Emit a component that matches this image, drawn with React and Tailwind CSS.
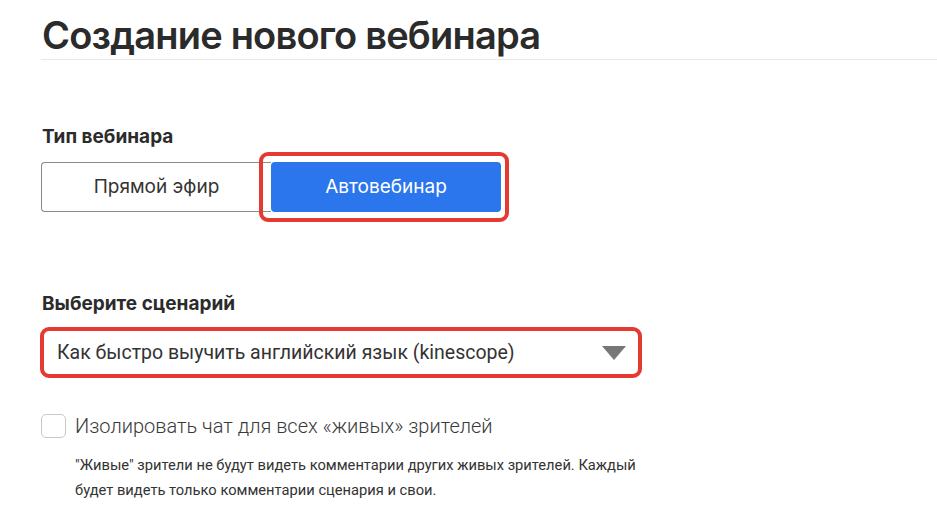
export default function App() {
  return (
    <div className="min-h-screen bg-white pl-[41px] font-['Inter',sans-serif] text-[#2d2d2d]">
      <div className="border-b border-[#e8e8e8] pt-[11px]">
        <h1 className="pl-[1px] text-[38px] font-semibold leading-[48px] tracking-[-0.8px] text-[#2b2b2b]">
          Создание нового вебинара
        </h1>
      </div>

      <div className="mt-[65px] pl-[1px] text-[19px] font-bold leading-[24px] text-[#2b2b2b]">
        Тип вебинара
      </div>

      <div className="relative mt-[13px] flex w-[460px]">
        <button className="h-[50px] w-[230px] rounded-l-[4px] border border-r-0 border-[#8a8a8a] bg-white text-[19px] text-[#333]">
          Прямой эфир
        </button>
        <button className="h-[50px] w-[230px] rounded-[4px] bg-[#2b76ec] text-[19px] text-white">
          Автовебинар
        </button>
        <div className="pointer-events-none absolute left-[218px] top-[-10px] h-[70px] w-[250px] rounded-[9px] border-4 border-[#e53a31]" />
      </div>

      <div className="mt-[80px] pl-[1px] text-[19px] font-bold leading-[24px] text-[#2b2b2b]">
        Выберите сценарий
      </div>

      <div className="mt-[11px] flex h-[51px] w-[602px] items-center justify-between rounded-[9px] border-4 border-[#e53a31] pl-[13px] pr-[12px] -ml-[1px]">
        <span className="font-['Roboto',sans-serif] text-[19.5px] text-[#333]">
          Как быстро выучить английский язык (kinescope)
        </span>
        <svg width="24" height="14" viewBox="0 0 24 14">
          <polygon points="0,0 24,0 12,14" fill="#777" />
        </svg>
      </div>

      <label className="mt-[33px] flex items-center gap-[9px]">
        <span className="h-[24px] w-[25px] rounded-[5px] border border-[#c8c8c8] bg-white" />
        <span className="font-['Roboto',sans-serif] text-[20px] font-light text-[#3a3a3a]">
          Изолировать чат для всех «живых» зрителей
        </span>
      </label>

      <p className="mt-[12px] ml-[34px] w-[566px] font-['Roboto',sans-serif] text-[14.7px] leading-[25px] text-[#333]">
        "Живые" зрители не будут видеть комментарии других живых зрителей. Каждый будет видеть только комментарии сценария и свои.
      </p>
    </div>
  );
}
